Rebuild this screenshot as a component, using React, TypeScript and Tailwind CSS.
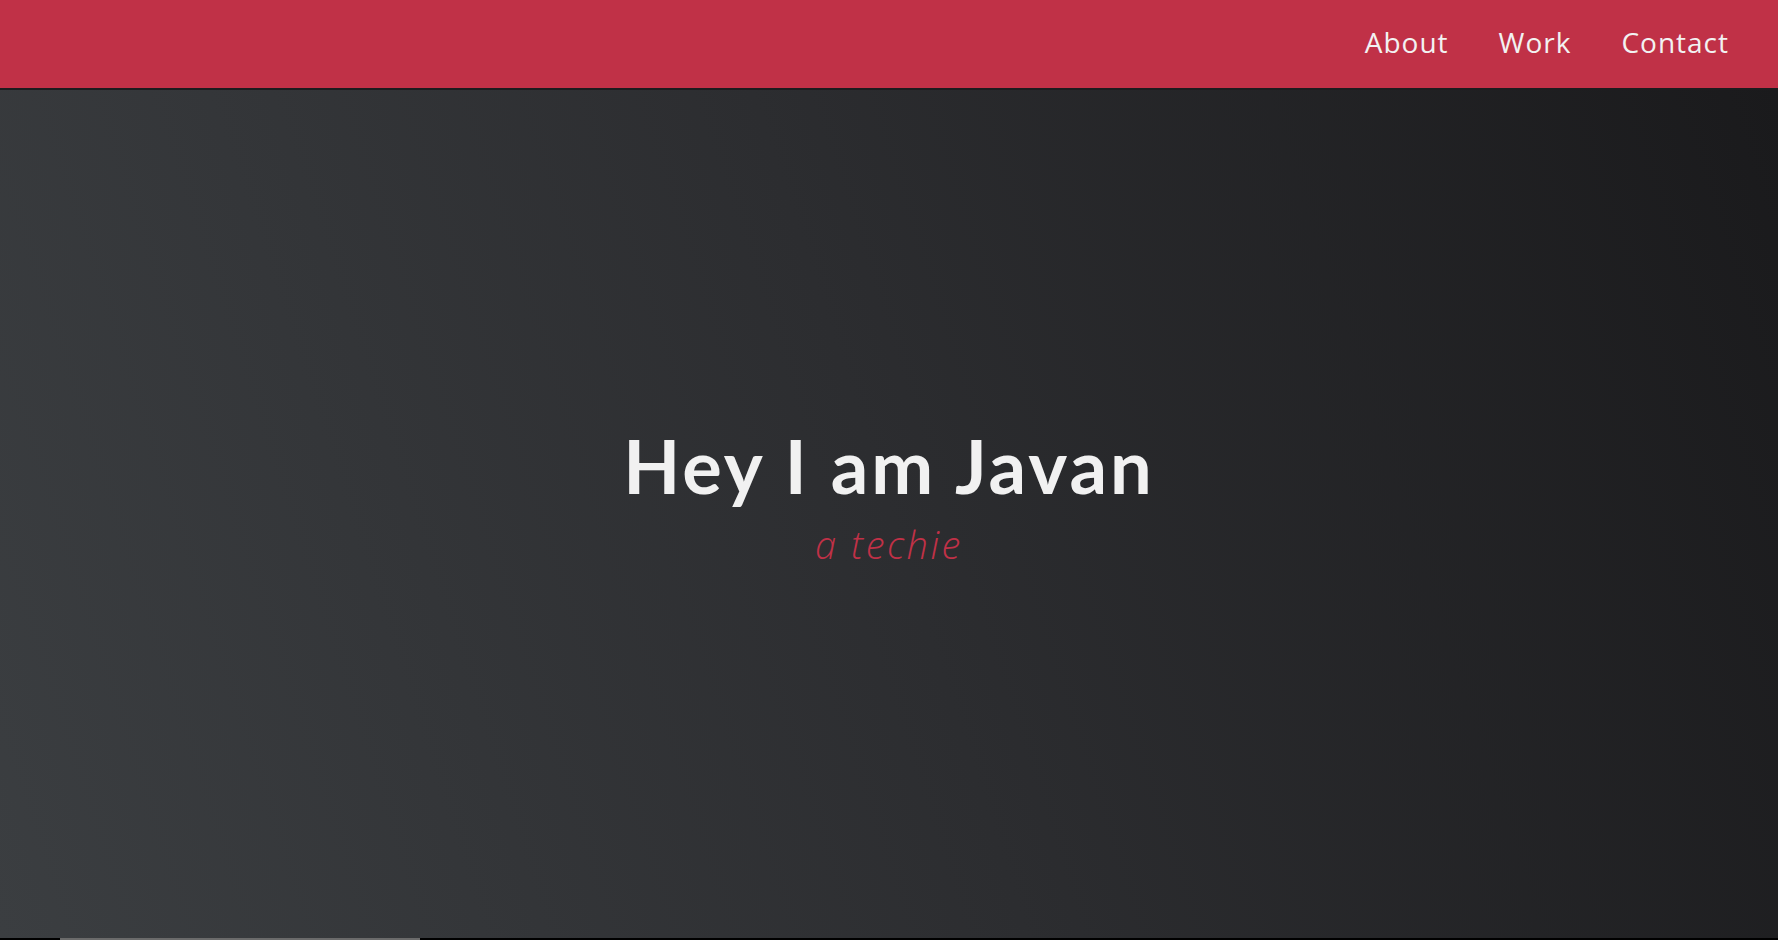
export default function App() {
  return (
    <div className="flex h-[940px] w-full flex-col overflow-hidden bg-black">
      {/* NAV */}
      <header className="flex h-[88px] shrink-0 items-center justify-end bg-[#c03147] pb-[4px] pr-[49px] font-['Open_Sans',sans-serif] text-[#f2f2f2]">
        <nav className="flex items-center gap-[50px] text-[28px] leading-none tracking-[1px]">
          <a href="#about">About</a>
          <a href="#work">Work</a>
          <a href="#contact">Contact</a>
        </nav>
      </header>
      <div className="h-[2px] shrink-0 bg-[#1b1c1e]" />

      {/* HERO */}
      <section className="flex flex-1 flex-col items-center justify-center bg-[linear-gradient(72deg,#3b3e41_0%,#2c2d30_50%,#1a1a1c_100%)] pb-[37px]">
        <h1 className="font-['Lato',sans-serif] text-[74px] font-bold leading-none tracking-[3px] text-[#f1f1f1]">
          Hey I am Javan
        </h1>
        <p className="mt-[22px] font-['Open_Sans',sans-serif] text-[38px] font-light italic leading-none tracking-[2.5px] text-[#c03147]">
          a techie
        </p>
      </section>

      <div className="flex h-[2px] shrink-0 bg-black">
        <div className="ml-[60px] w-[360px] bg-[#6b6b6b]" />
      </div>
    </div>
  );
}
